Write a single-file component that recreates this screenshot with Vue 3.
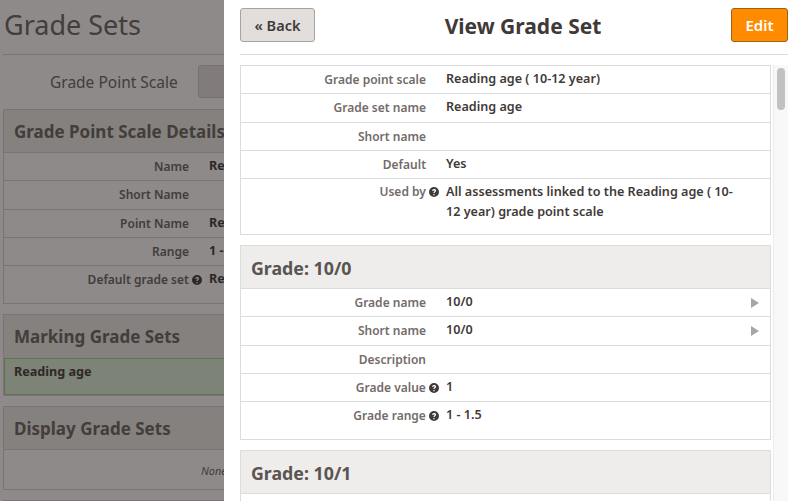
<template>
  <div class="screen">
    <!-- page behind the drawer -->
    <div class="page">
      <h1 class="page-title">Grade Sets</h1>
      <div class="scale-row">
        <span class="scale-label">Grade Point Scale</span>
        <span class="scale-select"></span>
      </div>

      <section class="bg-card">
        <h2 class="bg-head">Grade Point Scale Details</h2>
        <div v-for="row in scaleRows" :key="row.label" class="bg-row">
          <span class="bg-label">
            {{ row.label }}
            <svg v-if="row.help" class="help" viewBox="0 0 16 16"><use href="#help-icon" /></svg>
          </span>
          <span class="bg-value">{{ row.value }}</span>
        </div>
        <div class="bg-pad"></div>
      </section>

      <section class="bg-card">
        <h2 class="bg-head bg-head--flat">Marking Grade Sets</h2>
        <div class="marking-item">Reading age</div>
      </section>

      <section class="bg-card">
        <h2 class="bg-head">Display Grade Sets</h2>
        <div class="none-row">None</div>
      </section>
      <section class="bg-card"></section>
    </div>
    <div class="overlay"></div>

    <!-- drawer -->
    <aside class="drawer">
      <header class="drawer-head">
        <button class="btn-back">« Back</button>
        <h2 class="drawer-title">View Grade Set</h2>
        <button class="btn-edit">Edit</button>
      </header>

      <div class="drawer-body">
        <div class="drawer-scroll">
          <section class="card">
            <div v-for="row in setRows" :key="row.label" class="row" :class="{ 'row--tall': row.tall }">
              <span class="label">
                {{ row.label }}
                <svg v-if="row.help" class="help" viewBox="0 0 16 16"><use href="#help-icon" /></svg>
              </span>
              <span class="value">{{ row.value }}</span>
            </div>
          </section>

          <section v-for="grade in grades" :key="grade.name" class="card">
            <h3 class="card-head">Grade: {{ grade.name }}</h3>
            <div class="row">
              <span class="label">Grade name</span>
              <span class="value">{{ grade.name }}</span>
              <span class="arrow"></span>
            </div>
            <div class="row">
              <span class="label">Short name</span>
              <span class="value">{{ grade.name }}</span>
              <span class="arrow"></span>
            </div>
            <div class="row">
              <span class="label">Description</span>
              <span class="value"></span>
            </div>
            <div class="row">
              <span class="label">
                Grade value
                <svg class="help" viewBox="0 0 16 16"><use href="#help-icon" /></svg>
              </span>
              <span class="value">{{ grade.value }}</span>
            </div>
            <div class="row row--last">
              <span class="label">
                Grade range
                <svg class="help" viewBox="0 0 16 16"><use href="#help-icon" /></svg>
              </span>
              <span class="value">{{ grade.range }}</span>
            </div>
          </section>
        </div>

        <div class="scroll-track"><div class="scroll-thumb"></div></div>
      </div>
    </aside>

    <svg class="icon-defs" aria-hidden="true">
      <symbol id="help-icon" viewBox="0 0 16 16">
        <path
          fill="currentColor"
          fill-rule="evenodd"
          d="M8 0a8 8 0 1 0 0 16A8 8 0 0 0 8 0zM8.900 13.200H7v-1.900h1.900zM10.900 7.300c-.3.400-.7.700-1.100 1-.5.300-.8.700-.8 1.200H7c0-1 .3-1.600 1-2.100.5-.4 1.100-.7 1.100-1.300 0-.5-.4-.8-1-.8-.7 0-1.200.4-1.300 1.200L4.900 6C5.100 4.200 6.400 3.100 8.200 3.100c1.900 0 3.100 1 3.100 2.600 0 .6-.1 1.100-.4 1.600z"
        />
      </symbol>
    </svg>
  </div>
</template>

<script setup>
const scaleRows = [
  { label: 'Name', value: 'Reading age ( 10-12 year)' },
  { label: 'Short Name', value: '' },
  { label: 'Point Name', value: 'Reading age' },
  { label: 'Range', value: '1 - 24' },
  { label: 'Default grade set', value: 'Reading age', help: true },
]

const setRows = [
  { label: 'Grade point scale', value: 'Reading age ( 10-12 year)' },
  { label: 'Grade set name', value: 'Reading age' },
  { label: 'Short name', value: '' },
  { label: 'Default', value: 'Yes' },
  {
    label: 'Used by',
    value: 'All assessments linked to the Reading age ( 10-12 year) grade point scale',
    help: true,
    tall: true,
  },
]

const grades = [
  { name: '10/0', value: 1, range: '1 - 1.5' },
  { name: '10/1', value: 2, range: '2 - 2.5' },
]
</script>

<style>
html, body {
  margin: 0;
  height: 100%;
  overflow: hidden;
}
</style>

<style scoped>
.screen {
  position: relative;
  display: flex;
  width: 794px;
  height: 501px;
  overflow: hidden;
  background: #fff;
  font-family: "Noto Sans", "Liberation Sans", sans-serif;
}

.icon-defs {
  position: absolute;
  width: 0;
  height: 0;
}

/* hangs past the right edge of the label column */
.help {
  width: 10px;
  height: 10px;
  margin: 0 -13px 0 0;
  vertical-align: -1px;
  color: #3f3a38;
}

/* ─── Page behind ────────────────────────────────────────── */
.page {
  flex: 0 0 224px;
  width: 224px;
  box-sizing: border-box;
  padding: 0 0 0 3px;
  overflow: hidden;
  color: #6b6462;
}

.page > * {
  width: 300px;
}

.page-title {
  margin: 0;
  height: 55px;
  box-sizing: border-box;
  border-bottom: 1px solid #d8d5d4;
  padding: 4px 0 0 1px;
  font-size: 27px;
  font-weight: 400;
  line-height: 41px;
  white-space: nowrap;
}

.scale-row {
  display: flex;
  align-items: center;
  height: 33px;
  margin: 10px 0 11px;
}

.scale-label {
  flex: 0 0 195px;
  padding-left: 47px;
  box-sizing: border-box;
  font-size: 15.500px;
  white-space: nowrap;
}

.scale-select {
  width: 120px;
  height: 33px;
  box-sizing: border-box;
  border: 1px solid #ccc;
  border-radius: 3px;
  background: #e6e3e2;
}

.bg-card {
  box-sizing: border-box;
  margin-bottom: 10px;
  border: 1px solid #d8d5d4;
  background: #fff;
}

.bg-head {
  margin: 0;
  height: 43px;
  box-sizing: border-box;
  border-bottom: 1px solid #d8d5d4;
  padding-left: 10px;
  background: #eeedeb;
  font-size: 17px;
  font-weight: 700;
  line-height: 44px;
  white-space: nowrap;
}

.bg-head--flat {
  border-bottom: none;
}

.bg-row {
  display: flex;
  height: 28.25px;
  box-sizing: border-box;
  border-bottom: 1px solid #d8d5d4;
  font-size: 12px;
  line-height: 27px;
  white-space: nowrap;
}

.bg-row:nth-last-child(2) {
  border-bottom: none;
}

.bg-label {
  flex: 0 0 185px;
  text-align: right;
  font-weight: 600;
}

.bg-value {
  margin-left: 20px;
  font-size: 12.600px;
  line-height: 26px;
  font-weight: 700;
  color: #403a38;
}

.bg-pad {
  height: 9px;
}

.marking-item {
  height: 37px;
  box-sizing: border-box;
  border: 1px solid #a3d18f;
  background: #dff0d8;
  padding-left: 9px;
  font-size: 12.600px;
  font-weight: 700;
  line-height: 26px;
  color: #403a38;
}

.none-row {
  height: 39px;
  padding-left: 197px;
  font-size: 11px;
  font-style: italic;
  line-height: 42px;
}

.overlay {
  position: absolute;
  inset: 0 570px 0 0;
  background: rgba(28, 22, 20, 0.5);
}

/* ─── Drawer ─────────────────────────────────────────────── */
.drawer {
  flex: 0 0 570px;
  box-sizing: border-box;
  display: flex;
  flex-direction: column;
  height: 501px;
  padding: 0 6px 0 16px;
  background: #fff;
  color: #3f3a38;
}

.drawer-head {
  display: flex;
  align-items: center;
  justify-content: space-between;
  flex: 0 0 55px;
  box-sizing: border-box;
  padding: 8px 0 12px;
  margin-bottom: 10px;
  border-bottom: 1px solid #dcdcdc;
}

.btn-back,
.btn-edit {
  height: 34px;
  border-radius: 3px;
  font-family: inherit;
  font-weight: 600;
  padding: 0;
}

.btn-back {
  width: 75px;
  border: 1px solid #a8a3a1;
  background: #e2dedc;
  color: #3f3a38;
  font-size: 14.500px;
}

.btn-edit {
  width: 57px;
  border: 1px solid #a0620f;
  background: #ff8c00;
  color: #fff;
  font-size: 15px;
}

.drawer-title {
  margin: 1px 0 0;
  font-size: 21px;
  font-weight: 700;
  color: #3f3a38;
}

.drawer-body {
  display: flex;
  flex: 1;
  min-height: 0;
  gap: 2px;
}

.drawer-scroll {
  flex: 1;
  min-width: 0;
  overflow: hidden;
}

.scroll-track {
  flex: 0 0 15px;
  box-sizing: border-box;
  padding: 3px 3px 0 3px;
  background: #f8f8f8;
  border-left: 1px solid #ececec;
}

.scroll-thumb {
  height: 42px;
  border-radius: 4px;
  background: #c1c1c1;
}

.card {
  margin-bottom: 10px;
  border: 1px solid #dcdcdc;
}

.card-head {
  margin: 0;
  height: 43px;
  box-sizing: border-box;
  border-bottom: 1px solid #dcdcdc;
  padding-left: 10px;
  background: #eeedeb;
  font-size: 17.800px;
  font-weight: 700;
  line-height: 44px;
  color: #5a5452;
}

.row {
  display: flex;
  min-height: 28.25px;
  box-sizing: border-box;
  border-bottom: 1px solid #dcdcdc;
  font-size: 12px;
  line-height: 27px;
}

.row:last-child {
  border-bottom: none;
}

.row--tall {
  padding: 3px 0 12px;
  line-height: 20px;
}

.row--last {
  padding-bottom: 10px;
}

.label {
  flex: 0 0 185px;
  text-align: right;
  font-weight: 600;
  color: #736b69;
  white-space: nowrap;
}

.value {
  flex: 0 0 295px;
  margin-left: 20px;
  font-size: 12.600px;
  line-height: 26px;
  font-weight: 600;
  color: #3f3a38;
}

.row--tall .value {
  line-height: 20px;
}

.arrow {
  align-self: center;
  margin-left: 10px;
  width: 0;
  height: 0;
  border-left: 8px solid #aaa4a4;
  border-top: 5px solid transparent;
  border-bottom: 5px solid transparent;
}
</style>
